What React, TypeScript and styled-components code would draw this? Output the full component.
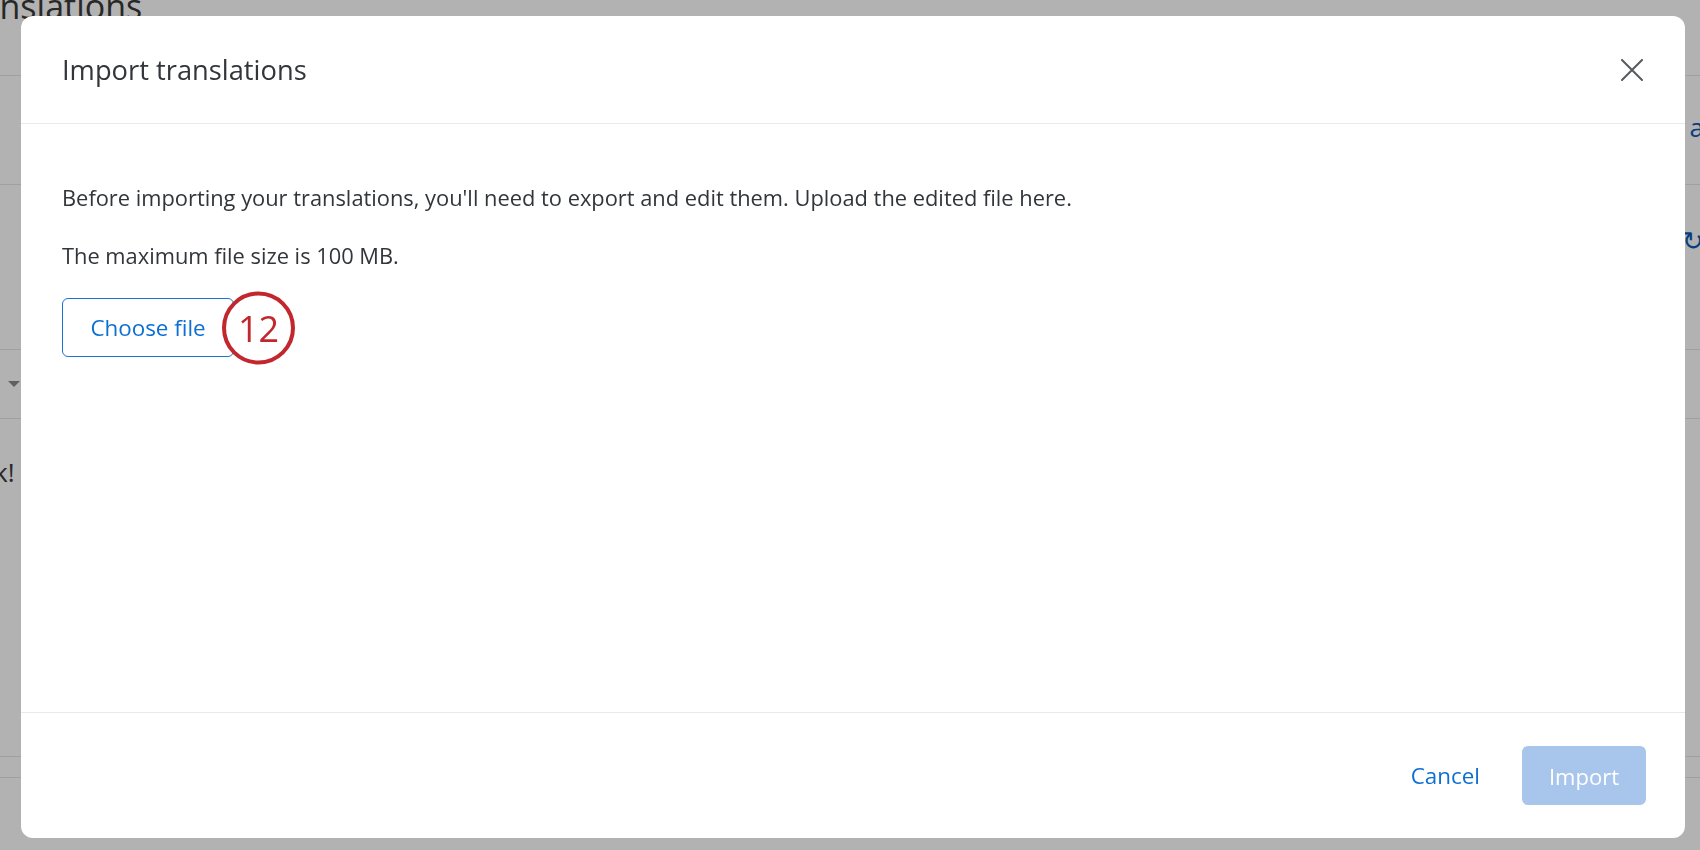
import styled, { createGlobalStyle } from "styled-components";

const GlobalStyle = createGlobalStyle`
  html, body {
    margin: 0;
    padding: 0;
    width: 100%;
    height: 100%;
    overflow: hidden;
    background: #ffffff;
    font-family: "Open Sans", "Liberation Sans", sans-serif;
    color: #32363a;
  }
`;

/* ---------- page behind the dialog ---------- */

const Page = styled.div`
  width: 100%;
  height: 850px;
  overflow: hidden;
  display: flex;
  flex-direction: column;
`;

const PageTitle = styled.h1`
  margin: -16px 0 0 -52px;
  height: 92px;
  font-size: 34px;
  font-weight: 400;
  line-height: 44px;
  color: #3a3a3a;
  border-bottom: 1px solid #e6e6e6;
  box-sizing: border-box;
`;

const PageRow = styled.div<{ $h: number }>`
  height: ${(p) => p.$h}px;
  border-bottom: 1px solid #e6e6e6;
  box-sizing: border-box;
  display: flex;
  align-items: flex-start;
  justify-content: space-between;
`;

const PageLink = styled.span<{ $top: number }>`
  font-size: 26px;
  line-height: 30px;
  color: #0b5bb5;
  margin: ${(p) => p.$top}px -4px 0 0;
`;

const Caret = styled.span`
  margin: 31px 0 0 8px;
  width: 0;
  height: 0;
  border-left: 6px solid transparent;
  border-right: 6px solid transparent;
  border-top: 6px solid #8a8a8a;
`;

const PageText = styled.span`
  font-size: 26px;
  line-height: 30px;
  color: #3a3a3a;
  margin: 38px 0 0 -6px;
`;

/* ---------- dialog ---------- */

const Overlay = styled.div`
  position: fixed;
  inset: 0;
  background: rgba(0, 0, 0, 0.3);
  padding: 16px 15px 12px 21px;
  box-sizing: border-box;
  display: flex;
`;

const Modal = styled.div`
  flex: 1;
  background: #ffffff;
  border-radius: 12px;
  display: flex;
  flex-direction: column;
  overflow: hidden;
`;

const Header = styled.div`
  height: 108px;
  flex-shrink: 0;
  box-sizing: border-box;
  border-bottom: 1px solid #e8e9ea;
  display: flex;
  align-items: center;
  justify-content: space-between;
  padding: 0 41px 0 41px;
`;

const Title = styled.h2`
  margin: 0;
  font-size: 27.3px;
  font-weight: 400;
  color: #32363a;
`;

const CloseButton = styled.button`
  border: none;
  background: none;
  padding: 0;
  width: 24px;
  height: 24px;
  display: flex;
  align-items: center;
  justify-content: center;
  cursor: pointer;
`;

const Body = styled.div`
  flex: 1;
  padding: 58px 41px 0;
`;

const Paragraph = styled.p`
  margin: 0 0 26px;
  font-size: 21.85px;
  line-height: 32px;
`;

const FileRow = styled.div`
  position: relative;
  display: flex;
  align-items: center;
  margin-top: 24px;
`;

const OutlineButton = styled.button`
  height: 59px;
  width: 172px;
  box-sizing: border-box;
  border: 1.5px solid #1a74d6;
  border-radius: 6px;
  background: #ffffff;
  color: #0d6fd1;
  font-family: inherit;
  font-size: 22.4px;
  cursor: pointer;
`;

const StepBadge = styled.span`
  position: absolute;
  left: 160px;
  top: 50%;
  transform: translateY(-50%);
  width: 73px;
  height: 73px;
  box-sizing: border-box;
  border: 4.5px solid #c1272d;
  border-radius: 50%;
  background: #ffffff;
  color: #c1272d;
  font-size: 36px;
  display: flex;
  align-items: center;
  justify-content: center;
`;

const Footer = styled.div`
  height: 126px;
  flex-shrink: 0;
  box-sizing: border-box;
  border-top: 1px solid #e8e9ea;
  display: flex;
  align-items: center;
  justify-content: flex-end;
  gap: 42px;
  padding: 0 39px 0 0;
`;

const TextButton = styled.button`
  border: none;
  background: none;
  padding: 0;
  color: #0d6fd1;
  font-family: inherit;
  font-size: 22.4px;
  cursor: pointer;
`;

const PrimaryButton = styled.button<{ $disabled?: boolean }>`
  width: 124px;
  height: 59px;
  border: none;
  border-radius: 6px;
  background: ${(p) => (p.$disabled ? "#a8c6ec" : "#0d6fd1")};
  color: #ffffff;
  font-family: inherit;
  font-size: 22px;
  cursor: ${(p) => (p.$disabled ? "default" : "pointer")};
`;

export default function App() {
  return (
    <>
      <GlobalStyle />
      <Page>
        <PageTitle>Translations</PageTitle>
        <PageRow $h={109}>
          <span />
          <PageLink $top={36}>a</PageLink>
        </PageRow>
        <PageRow $h={165}>
          <span />
          <PageLink $top={40}>↻</PageLink>
        </PageRow>
        <PageRow $h={69}>
          <Caret />
        </PageRow>
        <PageRow $h={338}>
          <PageText>k!</PageText>
        </PageRow>
        <PageRow $h={21} />
      </Page>

      <Overlay>
        <Modal role="dialog" aria-labelledby="import-title">
          <Header>
            <Title id="import-title">Import translations</Title>
            <CloseButton aria-label="Close">
              <svg width="22" height="22" viewBox="0 0 22 22">
                <path
                  d="M1 1 L21 21 M21 1 L1 21"
                  stroke="#555a5f"
                  strokeWidth="2"
                  strokeLinecap="round"
                />
              </svg>
            </CloseButton>
          </Header>
          <Body>
            <Paragraph>
              Before importing your translations, you'll need to export and edit
              them. Upload the edited file here.
            </Paragraph>
            <Paragraph>The maximum file size is 100 MB.</Paragraph>
            <FileRow>
              <OutlineButton>Choose file</OutlineButton>
              <StepBadge>12</StepBadge>
            </FileRow>
          </Body>
          <Footer>
            <TextButton>Cancel</TextButton>
            <PrimaryButton $disabled>Import</PrimaryButton>
          </Footer>
        </Modal>
      </Overlay>
    </>
  );
}
